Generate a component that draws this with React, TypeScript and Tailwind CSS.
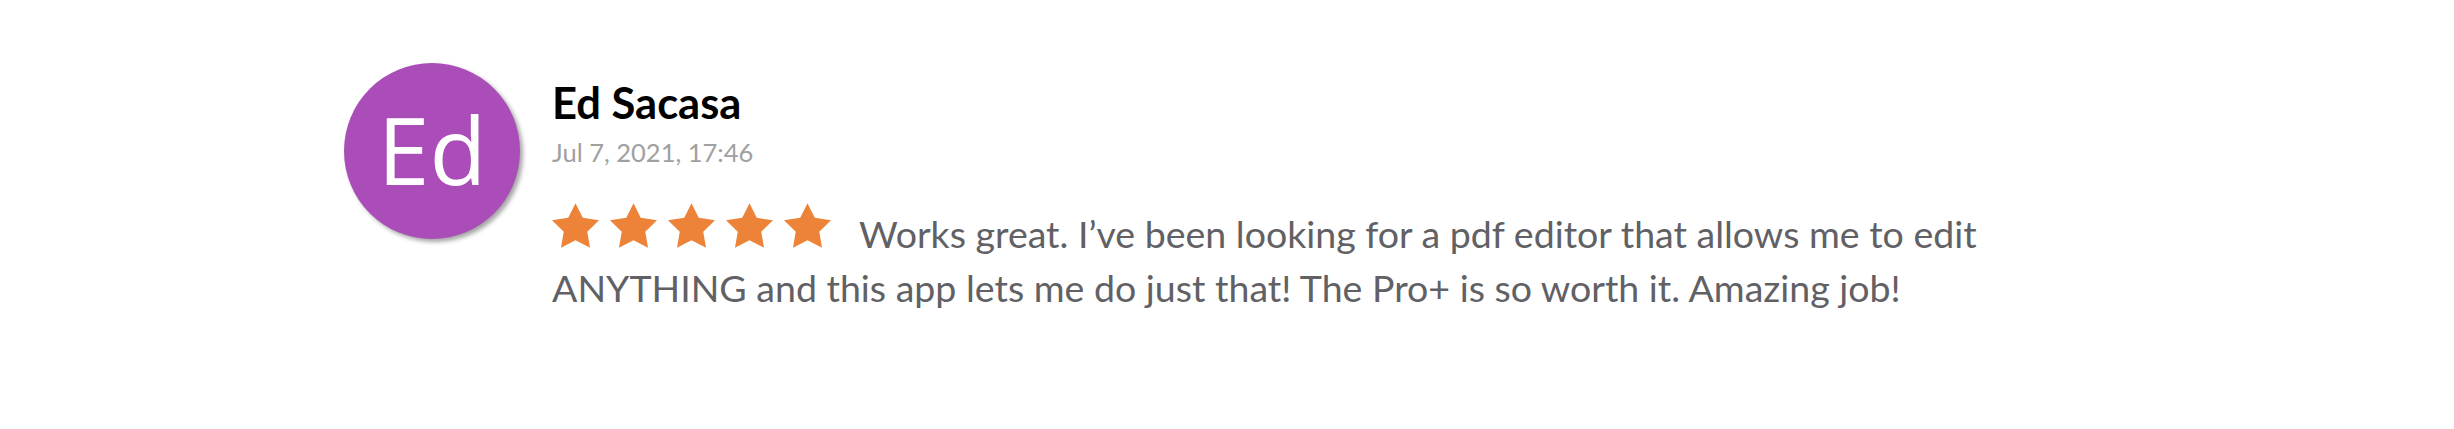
export default function App() {
  const stars = [0, 1, 2, 3, 4];

  return (
    <div className="w-[2454px] h-[429px] bg-white" style={{ fontFamily: 'Lato, "Open Sans", sans-serif' }}>
      <div className="flex items-start gap-[32px] pl-[344px] pt-[63px]">
        {/* Avatar */}
        <div className="w-[176px] h-[176px] shrink-0 rounded-full bg-[#aa4db8] shadow-[3px_3px_4px_rgba(0,0,0,0.35)] flex items-center justify-center">
          <span
            className="text-white text-[93px] leading-none pb-[4px]"
            style={{ fontFamily: '"Open Sans", "Noto Sans", sans-serif' }}
          >
            Ed
          </span>
        </div>

        {/* Review body */}
        <div className="w-[1450px]">
          <h3 className="mt-[15px] text-[43.5px] leading-[48px] font-bold text-black">Ed Sacasa</h3>
          <p className="mt-[12px] text-[25.5px] leading-[29px] text-[#a0a0a0]">Jul 7, 2021, 17:46</p>
          <p className="mt-[36px] text-[37.5px] leading-[54px] text-[#616165]">
            <span className="inline-flex items-end gap-[11px] mr-[28px]">
              {stars.map((i) => (
                <svg key={i} width="47" height="45" viewBox="2 2 20 19.02" fill="#ec8338">
                  <path d="M12 2l3.09 6.26L22 9.27l-5 4.87 1.18 6.88L12 17.77l-6.18 3.25L7 14.14 2 9.27l6.91-1.01L12 2z" />
                </svg>
              ))}
            </span>
            Works great. I’ve been looking for a pdf editor that allows me to edit ANYTHING and this app lets me do
            just that! The Pro+ is so worth it. Amazing job!
          </p>
        </div>
      </div>
    </div>
  );
}
